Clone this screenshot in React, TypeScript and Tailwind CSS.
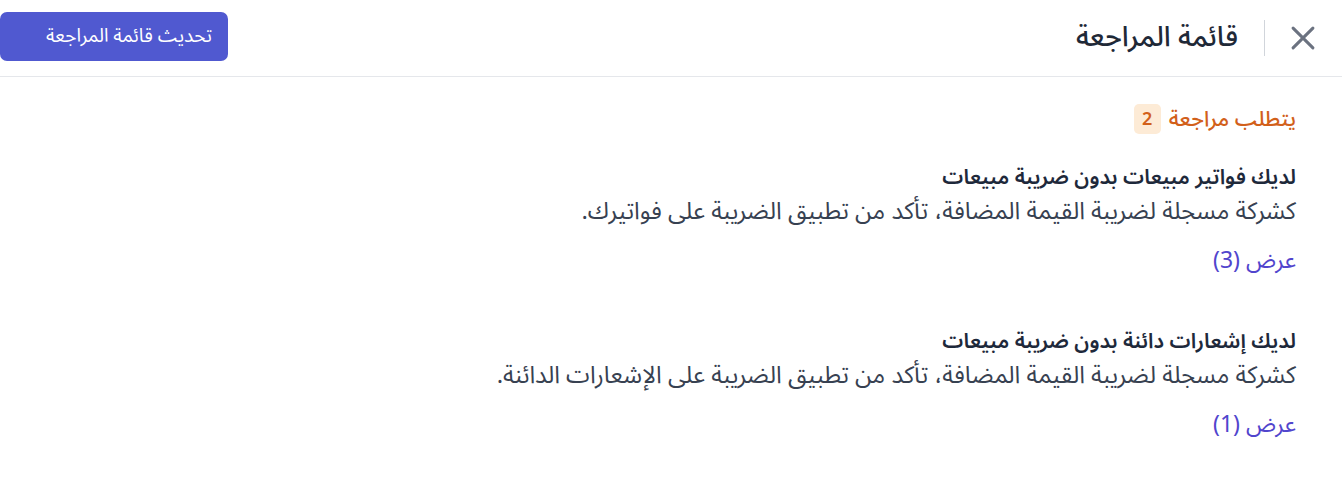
import React from 'react';

const items = [
  {
    title: 'لديك فواتير مبيعات بدون ضريبة مبيعات',
    desc: 'كشركة مسجلة لضريبة القيمة المضافة، تأكد من تطبيق الضريبة على فواتيرك.',
    count: 3,
  },
  {
    title: 'لديك إشعارات دائنة بدون ضريبة مبيعات',
    desc: 'كشركة مسجلة لضريبة القيمة المضافة، تأكد من تطبيق الضريبة على الإشعارات الدائنة.',
    count: 1,
  },
];

const App: React.FC = () => {
  return (
    <div
      dir="rtl"
      className="w-[1342px] h-[504px] bg-white"
      style={{ fontFamily: '"Noto Sans Arabic", "Noto Sans", "DejaVu Sans", sans-serif' }}
    >
      {/* Header */}
      <div className="h-[77px] flex items-center justify-between border-b border-[#e5e7eb] pr-[25px]">
        <div className="flex items-center">
          <button className="w-[28px] h-[28px] flex items-center justify-center text-[#6b7280]">
            <svg width="28" height="28" viewBox="0 0 24 24" fill="none" stroke="currentColor" strokeWidth="2.6" strokeLinecap="round">
              <path d="M3.5 3.5L20.5 20.5M20.5 3.5L3.5 20.5" />
            </svg>
          </button>
          <div className="w-px h-[36px] bg-[#d1d5db] mr-[24px] ml-[26px]" />
          <h1 className="text-[28px] font-medium text-[#1f2937] leading-[36px]">قائمة المراجعة</h1>
        </div>
        <button className="h-[49px] w-[228px] rounded-[7px] bg-[#5059d0] text-white text-[19px] flex items-center justify-start pr-[16px] mb-[3px]">
          تحديث قائمة المراجعة
        </button>
      </div>

      {/* Body */}
      <div className="pr-[46px] pt-[27px]">
        <div className="flex items-center gap-[8px]">
          <span className="text-[21.5px] font-medium text-[#d2601a] leading-[29px]">يتطلب مراجعة</span>
          <span className="w-[27px] h-[30px] rounded-[5px] bg-[#fdebd6] text-[#d2601a] text-[18px] font-semibold flex items-center justify-center">
            2
          </span>
        </div>

        <div className="mt-[27px] flex flex-col gap-[47px]">
          {items.map((it, i) => (
            <div key={i} className="flex flex-col">
              <h3 className="text-[21px] font-semibold text-[#1e293b] leading-[32px]">{it.title}</h3>
              <p className="text-[24px] text-[#374151] leading-[38px]">{it.desc}</p>
              <a className="mt-[13px] text-[23px] text-[#5145cd] leading-[34px]">عرض ({it.count})</a>
            </div>
          ))}
        </div>
      </div>
    </div>
  );
};

export default App;
